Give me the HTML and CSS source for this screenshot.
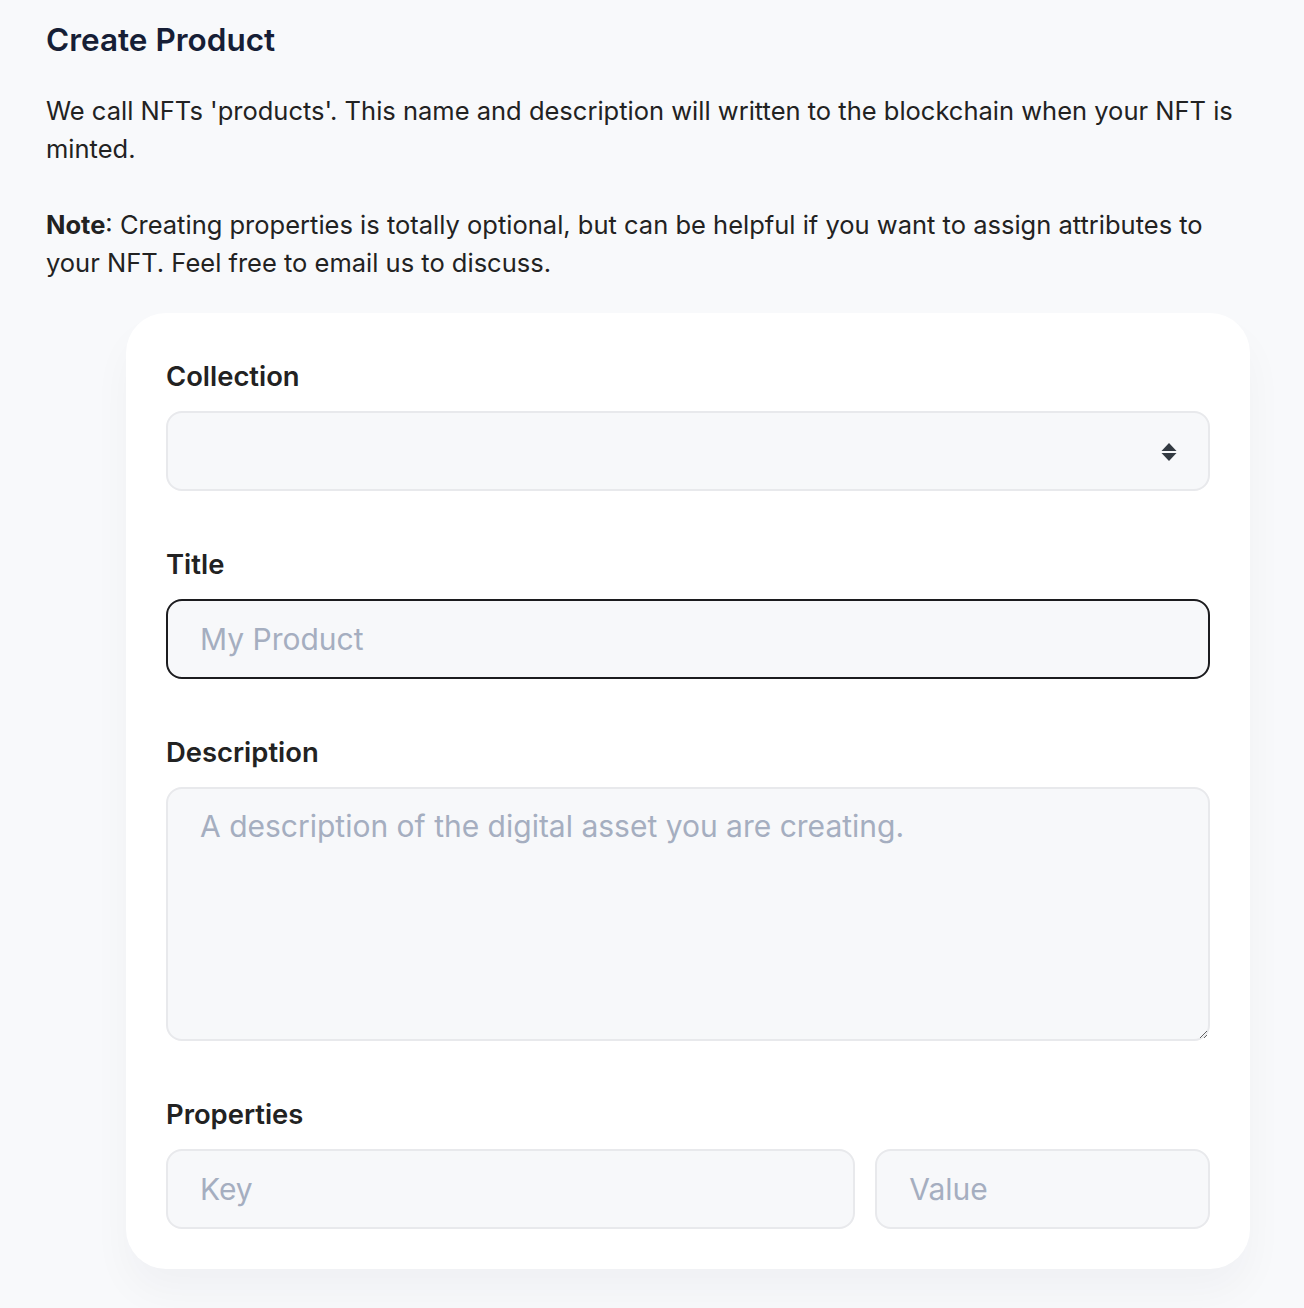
FILE: index.html
```html
<!DOCTYPE html>
<html lang="en">
<head>
<meta charset="utf-8">
<title>Create Product</title>
<link rel="stylesheet" href="styles.css">
</head>
<body>
<main class="page">
  <h1 class="page-title">Create Product</h1>
  <p class="intro">We call NFTs 'products'. This name and description will written to the blockchain when your NFT is minted.</p>
  <p class="intro"><strong>Note</strong>: Creating properties is totally optional, but can be helpful if you want to assign attributes to your NFT. Feel free to email us to discuss.</p>

  <form class="card">
    <div class="field">
      <label class="label" for="collection">Collection</label>
      <div class="select-wrap">
        <select id="collection" class="control select"><option></option></select>
        <svg class="select-arrows" width="16" height="20" viewBox="0 0 16 20" aria-hidden="true">
          <path d="M8 1 L15.5 9 L0.5 9 Z" fill="#333a42"/>
          <path d="M0.5 11 L15.5 11 L8 19 Z" fill="#333a42"/>
        </svg>
      </div>
    </div>
    <div class="field">
      <label class="label" for="title">Title</label>
      <input id="title" class="control control-focus" type="text" placeholder="My Product" autofocus>
    </div>
    <div class="field">
      <label class="label" for="desc">Description</label>
      <textarea id="desc" class="control textarea" placeholder="A description of the digital asset you are creating."></textarea>
    </div>
    <div class="field">
      <span class="label">Properties</span>
      <div class="props">
        <input class="control prop-key" type="text" placeholder="Key">
        <input class="control" type="text" placeholder="Value">
      </div>
    </div>
  </form>
</main>
</body>
</html>
```

FILE: styles.css
```css
* { box-sizing: border-box; }
html, body { margin: 0; padding: 0; }
body {
  background: #f8f9fb;
  font-family: Inter, "Noto Sans", sans-serif;
  color: #222222;
  min-height: 1308px;
}
.page {
  padding: 22px 54px 38px 46px;
}
.page-title {
  margin: 0;
  font-size: 31.5px;
  line-height: 36px;
  font-weight: 600;
  color: #161e36;
}
.intro {
  margin: 34px 0 0;
  font-size: 25.5px;
  line-height: 38px;
  color: #222222;
  max-width: 1204px;
}
.intro + .intro { margin-top: 38px; }
.intro strong { font-weight: 700; }

.card {
  margin: 31px 0 0 80px;
  width: 1124px;
  background: #ffffff;
  border-radius: 40px;
  padding: 40px 40px 40px;
  box-shadow: 0 24px 40px rgba(30, 40, 60, 0.035);
}
.field { display: flex; flex-direction: column; }
.field + .field { margin-top: 50px; }
.label {
  display: block;
  font-size: 27.4px;
  line-height: 32px;
  font-weight: 600;
  color: #222222;
  margin: 7px 0 19px;
}
.control {
  display: block;
  width: 100%;
  height: 80px;
  border: 2px solid #e8e9ec;
  border-radius: 16px;
  background: #f7f8fa;
  font-family: Inter, "Noto Sans", sans-serif;
  font-size: 30px;
  color: #222222;
  padding: 0 32px;
  outline: none;
}
.control::placeholder { color: #a5aec0; }
.control-focus { border-color: #1c1c1f; caret-color: #000000; }
.select-wrap { position: relative; }
.select { appearance: none; -webkit-appearance: none; }
.select-arrows {
  position: absolute;
  right: 33px;
  top: 31px;
  pointer-events: none;
}
.textarea {
  height: 254px;
  padding: 18px 32px;
  line-height: 38px;
  resize: vertical;
}
.props {
  display: grid;
  grid-template-columns: repeat(3, 1fr);
  column-gap: 20px;
}
.prop-key { grid-column: span 2; }
```
